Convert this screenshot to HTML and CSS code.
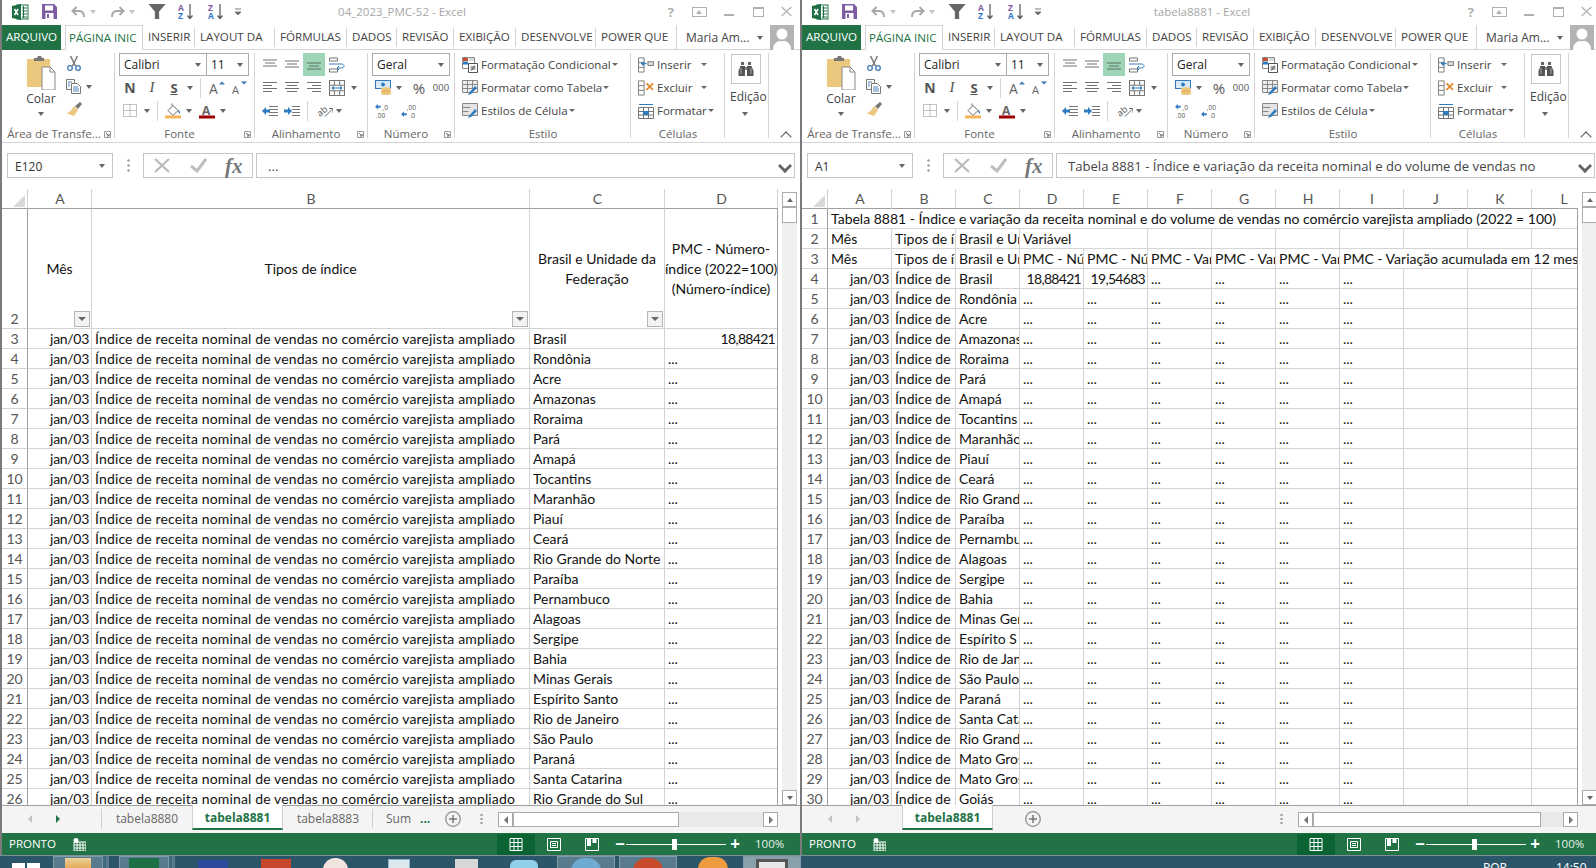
FILE: index.html
```html
<!DOCTYPE html>
<html lang="pt-BR">
<head>
    <meta charset="UTF-8">
    <title>Excel - PMC</title>
    <link rel="stylesheet" href="styles.css">
</head>
<body>

    <!-- Icon sprite, used by both windows -->
    <svg class="sprite" xmlns="http://www.w3.org/2000/svg">
        <symbol id="i-excel" viewBox="0 0 17 16"><rect x="5" y="1" width="11" height="14" fill="#fff" stroke="#1d7044"/><path d="M10 4h5M10 7h5M10 10h5M10 13h5M11.5 2v12" stroke="#1d7044"/><path d="M0 2l9-2v16l-9-2z" fill="#1d7044"/><path d="M2.5 5l3.5 6M6 5l-3.5 6" stroke="#fff" stroke-width="1.5"/></symbol>
        <symbol id="i-save" viewBox="0 0 15 15"><path d="M0 0h12l3 3v12H0z" fill="#7d5ea3"/><rect x="3" y="1.500" width="8" height="5" fill="#fff"/><rect x="3.500" y="9" width="8" height="6" fill="#fff"/><rect x="5" y="10" width="2" height="4" fill="#7d5ea3"/></symbol>
        <symbol id="i-undo" viewBox="0 0 15 14"><path d="M5.500 2L1.500 6l4 4" fill="none" stroke="#a8a8a8" stroke-width="2"/><path d="M2 6h6c3 0 5 2 5 6" fill="none" stroke="#a8a8a8" stroke-width="2"/></symbol>
        <symbol id="i-redo" viewBox="0 0 15 14"><path d="M9.500 2l4 4-4 4" fill="none" stroke="#a8a8a8" stroke-width="2"/><path d="M13 6H7c-3 0-5 2-5 6" fill="none" stroke="#a8a8a8" stroke-width="2"/></symbol>
        <symbol id="i-funnel" viewBox="0 0 16 14"><path d="M0 0h16l-6 7v7H6V7z" fill="#666"/></symbol>
        <symbol id="i-sortaz" viewBox="0 0 16 17"><text x="0" y="7.500" font-family="Open Sans" font-size="8.500" font-weight="700" fill="#7d5ea3">A</text><text x="0" y="16" font-family="Open Sans" font-size="8.500" font-weight="700" fill="#2f7cc0">Z</text><path d="M12 1v14M9.500 12.500l2.500 3 2.500-3" fill="none" stroke="#555" stroke-width="1.200"/></symbol>
        <symbol id="i-sortza" viewBox="0 0 16 17"><text x="0" y="7.500" font-family="Open Sans" font-size="8.500" font-weight="700" fill="#7d5ea3">Z</text><text x="0" y="16" font-family="Open Sans" font-size="8.500" font-weight="700" fill="#2f7cc0">A</text><path d="M12 1v14M9.500 12.500l2.500 3 2.500-3" fill="none" stroke="#555" stroke-width="1.200"/></symbol>
        <symbol id="i-custom" viewBox="0 0 8 8"><path d="M1 1h6M1 4h6l-3 3z" fill="#777" stroke="#777"/></symbol>
        <symbol id="i-avatar" viewBox="0 0 24 25"><rect width="24" height="25" fill="#b3b3b3"/><circle cx="12" cy="9" r="5.500" fill="#fff"/><path d="M3 25c0-6 3-8 6-9h6c3 1 6 3 6 9z" fill="#fff"/></symbol>
        <symbol id="i-paste" viewBox="0 0 29 34"><rect x="0" y="3" width="23" height="28" rx="1" fill="#ecc87f"/><path d="M7 5V2h3l1-2h3l1 2h2v3z" fill="#777"/><path d="M15 11h8l5 5v18H15z" fill="#fff" stroke="#8a8a8a"/><path d="M23 11v5h5" fill="none" stroke="#8a8a8a"/></symbol>
        <symbol id="i-scissors" viewBox="0 0 15 15"><path d="M4 0l5 10M11 0L6 10" stroke="#777" stroke-width="1.500"/><circle cx="3.500" cy="12" r="2.300" fill="none" stroke="#3a78b4" stroke-width="1.300"/><circle cx="11.500" cy="12" r="2.300" fill="none" stroke="#3a78b4" stroke-width="1.300"/></symbol>
        <symbol id="i-copy" viewBox="0 0 16 15"><path d="M.500.500h8v10h-8z" fill="#fff" stroke="#777"/><path d="M5.500 4.500h6l3 3v7h-9z" fill="#fff" stroke="#777"/><path d="M7 8h5M7 10h6M7 12h6M2 3h4M2 5h2M2 7h2" stroke="#4f86bd"/></symbol>
        <symbol id="i-brush" viewBox="0 0 16 15"><path d="M9 4l3 3 4-5-2-2z" fill="#777"/><path d="M8 4l4 4-4 6-8-3c3 0 5-2 8-7z" fill="#ecc87f"/></symbol>
        <symbol id="i-growup" viewBox="0 0 17 14"><text x="0" y="13" font-family="Open Sans" font-size="14" fill="#666">A</text><path d="M10 4l3-3 3 3z" fill="#3a78b4"/></symbol>
        <symbol id="i-growdn" viewBox="0 0 17 14"><text x="1" y="13" font-family="Open Sans" font-size="11" fill="#666">A</text><path d="M10 1l3 3 3-3z" fill="#3a78b4"/></symbol>
        <symbol id="i-borders" viewBox="0 0 14 13"><path d="M.500.500h13v12H.500z" fill="none" stroke="#888" stroke-dasharray="1 1"/><path d="M7 .500v12M.500 6.500h13" stroke="#888" stroke-dasharray="1 1"/></symbol>
        <symbol id="i-fill" viewBox="0 0 16 15"><path d="M3 7l5-5 5 5-5 5z" fill="#fff" stroke="#666"/><path d="M7 2V0" stroke="#666"/><path d="M13 6c2 1 2 3 2 4-1.500 0-2-2-2-4z" fill="#3a78b4"/><rect y="12" width="16" height="3" fill="#f6b35e"/></symbol>
        <symbol id="i-color" viewBox="0 0 16 15"><text x="3" y="11" font-family="Open Sans" font-size="12" font-weight="700" fill="#666">A</text><rect y="12" width="16" height="3" fill="#a00000"/></symbol>
        <symbol id="i-atop" viewBox="0 0 14 10"><path d="M0 .500h14M2 3.500h10M0 6.500h14" stroke="#707070"/></symbol>
        <symbol id="i-amid" viewBox="0 0 14 10"><path d="M0 1.500h14M2 4.500h10M0 7.500h14" stroke="#707070"/></symbol>
        <symbol id="i-abot" viewBox="0 0 14 10"><path d="M0 3.500h14M2 6.500h10M0 9.500h14" stroke="#5f6f66"/></symbol>
        <symbol id="i-wrap" viewBox="0 0 16 15"><path d="M.500.500h8v3h-8zM.500 11.500h8v3h-8z" fill="none" stroke="#777"/><path d="M0 6.500h12c4 0 4 4 0 4H8" fill="none" stroke="#2f7cc0"/><path d="M10 8.500l-2 2 2 2" fill="none" stroke="#2f7cc0"/></symbol>
        <symbol id="i-left" viewBox="0 0 14 11"><path d="M0 .500h14M0 3.500h9M0 6.500h14M0 9.500h9" stroke="#707070"/></symbol>
        <symbol id="i-center" viewBox="0 0 14 11"><path d="M0 .500h14M2 3.500h10M0 6.500h14M2 9.500h10" stroke="#707070"/></symbol>
        <symbol id="i-right" viewBox="0 0 14 11"><path d="M0 .500h14M5 3.500h9M0 6.500h14M5 9.500h9" stroke="#707070"/></symbol>
        <symbol id="i-merge" viewBox="0 0 15 15"><path d="M.500.500h14v14H.500zM.500 5h14M.500 10h14M5 .500V5M10 .500V5M5 10v4.500M10 10v4.500" fill="none" stroke="#777"/><path d="M3 7.500h9" stroke="#2f7cc0"/><path d="M4.500 6L3 7.500 4.500 9M10.500 6L12 7.500 10.500 9" fill="none" stroke="#2f7cc0"/></symbol>
        <symbol id="i-outdent" viewBox="0 0 16 10"><path d="M7 .500h9M7 3.500h9M7 6.500h9M7 9.500h9" stroke="#777"/><path d="M0 5l4-4v2.500h4v3H4V9z" fill="#2f7cc0"/></symbol>
        <symbol id="i-indent" viewBox="0 0 16 10"><path d="M8 .500h8M8 3.500h8M8 6.500h8M8 9.500h8" stroke="#777"/><path d="M8 5L4 1v2.500H0v3h4V9z" fill="#2f7cc0"/></symbol>
        <symbol id="i-orient" viewBox="0 0 17 14"><text x="1" y="11" font-family="Open Sans" font-size="9" fill="#555" transform="rotate(-40 6 8)">ab</text><path d="M9 13l7-7M13 5h4v4" fill="none" stroke="#666"/></symbol>
        <symbol id="i-money" viewBox="0 0 17 15"><rect x=".500" y=".500" width="15" height="8" fill="#d9e8f5" stroke="#2f7cc0"/><circle cx="8" cy="4.500" r="2" fill="#2f7cc0"/><ellipse cx="11" cy="9" rx="5" ry="1.800" fill="#ecc87f"/><ellipse cx="11" cy="11.500" rx="5" ry="1.800" fill="#e4b85f"/><ellipse cx="11" cy="13.500" rx="5" ry="1.500" fill="#ecc87f"/></symbol>
        <symbol id="i-incdec" viewBox="0 0 18 16"><path d="M0 4l3-3v2h3v2H3v2z" fill="#2f7cc0"/><text x="8" y="7.500" font-family="Open Sans" font-size="7" fill="#555">,0</text><text x="1" y="15.500" font-family="Open Sans" font-size="7" fill="#555">,00</text></symbol>
        <symbol id="i-decdec" viewBox="0 0 18 16"><text x="6" y="7.500" font-family="Open Sans" font-size="7" fill="#555">,00</text><path d="M0 12l3-3v2h3v2H3v2z" fill="#2f7cc0"/><text x="9" y="15.500" font-family="Open Sans" font-size="7" fill="#555">,0</text></symbol>
        <symbol id="i-cond" viewBox="0 0 16 16"><path d="M.500.500h12v11H.500z" fill="#fff" stroke="#888"/><rect x="1" y="1" width="5" height="3" fill="#c8502e"/><rect x="1" y="4.500" width="5" height="3" fill="#2f7cc0"/><rect x="7" y="1" width="5" height="3" fill="#d9d9d9"/><path d="M6.500 6.500h9v9h-9z" fill="#fff" stroke="#555"/><path d="M8.500 10h5M8.500 12h5M12.500 8.500l-3 5" stroke="#555"/></symbol>
        <symbol id="i-table" viewBox="0 0 16 16"><path d="M.500.500h15v12H.500zM.500 4.500h15M.500 8.500h15M5.500.500v12M10.500.500v12" fill="#eee" stroke="#888"/><path d="M7 13l6-7 2 2-6 6-3 1z" fill="#2f7cc0"/></symbol>
        <symbol id="i-style" viewBox="0 0 16 16"><path d="M.500.500h15v12H.500z" fill="#e4e4e4" stroke="#888"/><path d="M.500 4.500h8M.500 8.500h6" stroke="#888"/><path d="M7 13l6-7 2 2-6 6-3 1z" fill="#2f7cc0"/></symbol>
        <symbol id="i-insert" viewBox="0 0 17 16"><path d="M.500.500h6v15h-6zM.500 5.500h6M.500 10.500h6" fill="#fff" stroke="#777"/><path d="M10.500 4.500h6v4h-6z" fill="#ddd" stroke="#777"/><path d="M9 6.500H4M6 4.500l-2 2 2 2" fill="none" stroke="#2f7cc0" stroke-width="1.500"/></symbol>
        <symbol id="i-delete" viewBox="0 0 17 16"><path d="M.500.500h6v15h-6zM.500 5.500h6M.500 10.500h6" fill="#fff" stroke="#777"/><path d="M9 3l7 7M16 3l-7 7" stroke="#e08a2e" stroke-width="2"/></symbol>
        <symbol id="i-format" viewBox="0 0 16 16"><path d="M.500 4.500h15v11H.500zM.500 8.500h15M.500 12h15M5.500 4.500v11M10.500 4.500v11" fill="#fff" stroke="#777"/><rect x="5" y="8" width="6" height="4" fill="#2f7cc0"/><path d="M1 1.500h14" stroke="#2f7cc0"/></symbol>
        <symbol id="i-binoc" viewBox="0 0 16 14"><path d="M3 0h3v3H3zM10 0h3v3h-3z" fill="#666"/><path d="M2.500 4H7v10H.500v-5zM13.500 4H9v10h6.500V9z" fill="#555"/><rect x="7" y="5" width="2" height="3" fill="#888"/><path d="M3 6v6M13 6v6" stroke="#aaa"/></symbol>
        <symbol id="i-launch" viewBox="0 0 7 7"><path d="M.500.500h6v6h-6z" fill="none" stroke="#9a9a9a"/><path d="M2 2l3 3M5 3v2H3" fill="none" stroke="#666"/></symbol>
        <symbol id="i-x" viewBox="0 0 16 15"><path d="M1 1l14 13M15 1L1 14" stroke="#b8b8b8" stroke-width="2.200"/></symbol>
        <symbol id="i-check" viewBox="0 0 18 15"><path d="M1 8l6 5 9-12" fill="none" stroke="#bfbfbf" stroke-width="3"/></symbol>
        <symbol id="i-plusc" viewBox="0 0 16 16"><circle cx="8" cy="8" r="7.300" fill="none" stroke="#8e8e8e" stroke-width="1.300"/><path d="M8 4v8M4 8h8" stroke="#777" stroke-width="1.500"/></symbol>
        <symbol id="i-macro" viewBox="0 0 13 13"><path d="M1 4h12v9H1zM1 7h12M1 10h12M4 4v9M7 4v9M10 4v9" fill="none" stroke="#fff"/><circle cx="3" cy="2.500" r="2.500" fill="#fff"/></symbol>
        <symbol id="i-vnormal" viewBox="0 0 13 13"><path d="M.500.500h12v12H.500zM.500 4.500h12M.500 8.500h12M4.500.500v12M8.500.500v12" fill="none" stroke="#fff"/></symbol>
        <symbol id="i-vlayout" viewBox="0 0 14 13"><path d="M.500.500h13v12H.500z" fill="none" stroke="#fff"/><path d="M3.500 3.500h7v6h-7zM5 5.500h4M5 7.500h4" fill="none" stroke="#fff"/></symbol>
        <symbol id="i-vbreak" viewBox="0 0 14 13"><path d="M.500.500h13v12H.500z" fill="none" stroke="#fff"/><path d="M2 0h4v8H2zM7.500 0h4v5h-4z" fill="#fff"/></symbol>
    </svg>

    <div class="desk">
        <div class="window" id="win1"></div>
        <div class="window" id="win2"></div>
    </div>

    <div class="taskbar">
        <div class="tb-start"><i></i><i></i></div>
        <div class="tb-btn tb-stack"><span class="tb-ic ic-folder"></span></div>
        <div class="tb-btn tb-stack"><span class="tb-ic ic-xl"></span></div>
        <span class="tb-ic ic-word"></span>
        <span class="tb-ic ic-ppt"></span>
        <span class="tb-ic ic-ball"></span>
        <span class="tb-ic ic-win"></span>
        <span class="tb-ic ic-note"></span>
        <span class="tb-ic ic-cloud"></span>
        <div class="tb-btn"><span class="tb-ic ic-blue"></span></div>
        <div class="tb-btn"><span class="tb-ic ic-red"></span></div>
        <span class="tb-ic ic-fox"></span>
        <div class="tb-btn tb-light"><span class="tb-ic ic-box"></span></div>
        <div class="tb-tray"><span>POR</span><span>14:50</span></div>
    </div>

    <template id="chrome">
        <div class="titlebar">
            <div class="qat">
                <svg class="ic-excel"><use href="#i-excel"/></svg>
                <svg class="ic-save"><use href="#i-save"/></svg>
                <svg class="ic-undo"><use href="#i-undo"/></svg><span class="caret light"></span>
                <svg class="ic-redo"><use href="#i-redo"/></svg><span class="caret light"></span>
                <svg class="ic-funnel"><use href="#i-funnel"/></svg>
                <svg class="ic-sort ic-sort1"><use href="#i-sortaz"/></svg>
                <svg class="ic-sort"><use href="#i-sortza"/></svg>
                <svg class="ic-custom"><use href="#i-custom"/></svg>
            </div>
            <div class="doc-title"></div>
            <div class="win-ctrl">
                <span class="help">?</span>
                <span class="ctl-restore"></span>
                <span class="ctl-min"></span>
                <span class="ctl-max"></span>
                <svg class="ctl-close"><use href="#i-x"/></svg>
            </div>
        </div>

        <div class="tabs">
            <div class="tab tab-file">ARQUIVO</div>
            <div class="tab tab-on">PÁGINA INIC</div>
            <div class="tab">INSERIR</div>
            <div class="tab">LAYOUT DA</div>
            <div class="tab">FÓRMULAS</div>
            <div class="tab">DADOS</div>
            <div class="tab">REVISÃO</div>
            <div class="tab">EXIBIÇÃO</div>
            <div class="tab">DESENVOLVE</div>
            <div class="tab">POWER QUE</div>
            <div class="user"><span>Maria Am...</span><span class="caret"></span><svg class="avatar"><use href="#i-avatar"/></svg></div>
        </div>

        <div class="ribbon">
            <section class="group g-clip">
                <div class="body clip-body">
                    <div class="paste">
                        <svg class="ic-paste"><use href="#i-paste"/></svg>
                        <span>Colar</span>
                        <span class="caret"></span>
                    </div>
                    <div class="clip-tools">
                        <svg class="ic15"><use href="#i-scissors"/></svg>
                        <div class="row-tight"><svg class="ic15"><use href="#i-copy"/></svg><span class="caret"></span></div>
                        <svg class="ic15"><use href="#i-brush"/></svg>
                    </div>
                </div>
                <div class="label"><span>Área de Transfe...</span><svg class="launch"><use href="#i-launch"/></svg></div>
            </section>

            <section class="group g-font">
                <div class="body">
                    <div class="rrow">
                        <div class="combo w-font"><span>Calibri</span><span class="caret"></span></div>
                        <div class="combo w-size"><span>11</span><span class="caret"></span></div>
                    </div>
                    <div class="rrow">
                        <span class="btn b22 fmt-n">N</span>
                        <span class="btn b22 fmt-i">I</span>
                        <span class="btn b22 fmt-s">S</span>
                        <span class="btn b10"><span class="caret"></span></span>
                        <span class="vsep m5"></span>
                        <span class="btn b22"><svg class="ic17"><use href="#i-growup"/></svg></span>
                        <span class="btn b22"><svg class="ic17"><use href="#i-growdn"/></svg></span>
                    </div>
                    <div class="rrow">
                        <span class="btn b22"><svg class="ic14"><use href="#i-borders"/></svg></span>
                        <span class="btn b12"><span class="caret"></span></span>
                        <span class="vsep m-r8"></span>
                        <svg class="ic16"><use href="#i-fill"/></svg>
                        <span class="btn b16"><span class="caret"></span></span>
                        <svg class="ic16 ml2"><use href="#i-color"/></svg>
                        <span class="btn b16"><span class="caret"></span></span>
                    </div>
                </div>
                <div class="label"><span>Fonte</span><svg class="launch"><use href="#i-launch"/></svg></div>
            </section>

            <section class="group g-align">
                <div class="body">
                    <div class="rrow">
                        <span class="btn b22"><svg class="ic14s"><use href="#i-atop"/></svg></span>
                        <span class="btn b22"><svg class="ic14s"><use href="#i-amid"/></svg></span>
                        <span class="btn b22 btn-on"><svg class="ic14s"><use href="#i-abot"/></svg></span>
                        <span class="btn b24"><svg class="ic16"><use href="#i-wrap"/></svg></span>
                    </div>
                    <div class="rrow">
                        <span class="btn b22"><svg class="ic14s"><use href="#i-left"/></svg></span>
                        <span class="btn b22"><svg class="ic14s"><use href="#i-center"/></svg></span>
                        <span class="btn b22"><svg class="ic14s"><use href="#i-right"/></svg></span>
                        <span class="btn b24"><svg class="ic16"><use href="#i-merge"/></svg></span>
                        <span class="btn b10"><span class="caret"></span></span>
                    </div>
                    <div class="rrow">
                        <span class="btn b22"><svg class="ic16"><use href="#i-outdent"/></svg></span>
                        <span class="btn b22"><svg class="ic16"><use href="#i-indent"/></svg></span>
                        <span class="vsep m-lr4"></span>
                        <svg class="ic17 ml4"><use href="#i-orient"/></svg>
                        <span class="btn b12"><span class="caret"></span></span>
                    </div>
                </div>
                <div class="label"><span>Alinhamento</span><svg class="launch"><use href="#i-launch"/></svg></div>
            </section>

            <section class="group g-num">
                <div class="body">
                    <div class="rrow">
                        <div class="combo w-num"><span>Geral</span><span class="caret"></span></div>
                    </div>
                    <div class="rrow">
                        <span class="btn b22"><svg class="ic17"><use href="#i-money"/></svg></span>
                        <span class="btn b10"><span class="caret"></span></span>
                        <span class="btn b20 pct">%</span>
                        <span class="btn b20 thou">000</span>
                    </div>
                    <div class="rrow">
                        <span class="btn b22"><svg class="ic17"><use href="#i-incdec"/></svg></span>
                        <span class="btn b22 ml4"><svg class="ic17"><use href="#i-decdec"/></svg></span>
                    </div>
                </div>
                <div class="label"><span>Número</span><svg class="launch"><use href="#i-launch"/></svg></div>
            </section>

            <section class="group g-style">
                <div class="body">
                    <div class="rrow cmd"><svg class="ic16"><use href="#i-cond"/></svg><span>Formatação Condicional</span><span class="caret"></span></div>
                    <div class="rrow cmd"><svg class="ic16"><use href="#i-table"/></svg><span>Formatar como Tabela</span><span class="caret"></span></div>
                    <div class="rrow cmd"><svg class="ic16"><use href="#i-style"/></svg><span>Estilos de Célula</span><span class="caret"></span></div>
                </div>
                <div class="label"><span>Estilo</span></div>
            </section>

            <section class="group g-cells">
                <div class="body">
                    <div class="rrow cmd"><svg class="ic16"><use href="#i-insert"/></svg><span>Inserir</span><span class="caret wide"></span></div>
                    <div class="rrow cmd"><svg class="ic16"><use href="#i-delete"/></svg><span>Excluir</span><span class="caret wide"></span></div>
                    <div class="rrow cmd"><svg class="ic16"><use href="#i-format"/></svg><span>Formatar</span><span class="caret"></span></div>
                </div>
                <div class="label"><span>Células</span></div>
            </section>

            <section class="group g-edit">
                <div class="edit-box"><svg class="ic16"><use href="#i-binoc"/></svg></div>
                <span class="edit-text">Edição</span>
                <span class="caret"></span>
            </section>

            <div class="collapse"></div>
        </div>

        <div class="formula">
            <div class="namebox"><span class="name"></span><span class="caret"></span></div>
            <div class="fdots"></div>
            <div class="fbtns">
                <svg class="ic-fx"><use href="#i-x"/></svg>
                <svg class="ic-fc"><use href="#i-check"/></svg>
                <span class="fx">fx</span>
            </div>
            <div class="finput"><span class="ftext"></span><span class="fchev"></span></div>
        </div>
    </template>

    <template id="footer">
        <div class="status">
            <span class="ready">PRONTO</span>
            <svg class="ic-macro"><use href="#i-macro"/></svg>
            <div class="vbtn vbtn-on"><svg><use href="#i-vnormal"/></svg></div>
            <div class="vbtn"><svg><use href="#i-vlayout"/></svg></div>
            <div class="vbtn"><svg><use href="#i-vbreak"/></svg></div>
            <span class="zm zm-minus">&minus;</span>
            <div class="slider"><i></i></div>
            <span class="zm">+</span>
            <span class="zoom">100%</span>
        </div>
    </template>

    <script>
        const states = ['Brasil', 'Rondônia', 'Acre', 'Amazonas', 'Roraima', 'Pará', 'Amapá', 'Tocantins', 'Maranhão', 'Piauí', 'Ceará', 'Rio Grande do Norte', 'Paraíba', 'Pernambuco', 'Alagoas', 'Sergipe', 'Bahia', 'Minas Gerais', 'Espírito Santo', 'Rio de Janeiro', 'São Paulo', 'Paraná', 'Santa Catarina', 'Rio Grande do Sul', 'Mato Grosso do Sul', 'Mato Grosso', 'Goiás'];
        const indice = 'Índice de receita nominal de vendas no comércio varejista ampliado';
        const tplChrome = document.getElementById('chrome');
        const tplFooter = document.getElementById('footer');

        // Small helper for table cells: [text, class, colspan]
        function cell(tr, text, cls, span) {
            const td = document.createElement('td');
            td.textContent = text || '';
            if (cls) td.className = cls;
            if (span) td.colSpan = span;
            tr.appendChild(td);
            return td;
        }

        function filterBtn(td) {
            const b = document.createElement('span');
            b.className = 'filter';
            b.innerHTML = '<span class="caret"></span>';
            td.appendChild(b);
        }

        function buildSheet(widths, letters, fill) {
            const wrap = document.createElement('div');
            wrap.className = 'grid-wrap';
            const table = document.createElement('table');
            const colgroup = document.createElement('colgroup');
            const all = [26].concat(widths);
            all.forEach(w => {
                const col = document.createElement('col');
                col.style.width = `${w}px`;
                colgroup.appendChild(col);
            });
            table.style.width = `${all.reduce((a, b) => a + b, 0)}px`;
            table.appendChild(colgroup);
            const head = document.createElement('tr');
            head.className = 'col-head';
            cell(head, '', 'corner');
            letters.forEach(l => cell(head, l));
            table.appendChild(head);
            fill(table);
            wrap.appendChild(table);
            return wrap;
        }

        function addRow(table, n, cls) {
            const tr = document.createElement('tr');
            if (cls) tr.className = cls;
            cell(tr, n, 'rh');
            table.appendChild(tr);
            return tr;
        }

        function fillLeft(table) {
            const tall = addRow(table, 2, 'tall');
            filterBtn(cell(tall, 'Mês', 'hd'));
            filterBtn(cell(tall, 'Tipos de índice', 'hd'));
            filterBtn(cell(tall, 'Brasil e Unidade da\nFederação', 'hd'));
            cell(tall, 'PMC - Número-\níndice (2022=100)\n(Número-índice)', 'hd');
            states.slice(0, 24).forEach((st, i) => {
                const tr = addRow(table, i + 3);
                cell(tr, 'jan/03', 'num');
                cell(tr, indice, 'long');
                cell(tr, st);
                if (i === 0) cell(tr, '18,88421', 'num val');
                else cell(tr, '...');
            });
        }

        // The narrow columns on the right only show the start of each text
        function fillRight(table) {
            const r1 = addRow(table, 1);
            cell(r1, 'Tabela 8881 - Índice e variação da receita nominal e do volume de vendas no comércio varejista ampliado (2022 = 100)', '', 12);
            const r2 = addRow(table, 2);
            cell(r2, 'Mês');
            cell(r2, 'Tipos de ín');
            cell(r2, 'Brasil e Un');
            cell(r2, 'Variável', '', 2);
            for (let i = 0; i < 7; i++) cell(r2);
            const r3 = addRow(table, 3);
            cell(r3, 'Mês');
            cell(r3, 'Tipos de ín');
            cell(r3, 'Brasil e Un');
            cell(r3, 'PMC - Núm');
            cell(r3, 'PMC - Núm');
            cell(r3, 'PMC - Var');
            cell(r3, 'PMC - Var');
            cell(r3, 'PMC - Var');
            cell(r3, 'PMC - Variação acumulada em 12 meses', '', 4);
            states.forEach((st, i) => {
                const tr = addRow(table, i + 4);
                cell(tr, 'jan/03', 'num');
                cell(tr, 'Índice de');
                cell(tr, st.slice(0, 10));
                for (let c = 0; c < 6; c++) {
                    if (i === 0 && c === 0) cell(tr, '18,88421', 'num val');
                    else if (i === 0 && c === 1) cell(tr, '19,54683', 'num val');
                    else cell(tr, '...');
                }
                for (let c = 0; c < 3; c++) cell(tr);
            });
        }

        function buildVScroll() {
            const v = document.createElement('div');
            v.className = 'vscroll';
            v.innerHTML = '<div class="sb-btn"><span class="caret up"></span></div><div class="sb-thumb"></div><div class="sb-track"></div><div class="sb-btn"><span class="caret"></span></div>';
            return v;
        }

        function buildSheetBar(tabs, extraCls) {
            const bar = document.createElement('div');
            bar.className = `sheetbar ${extraCls}`;
            let html = '<div class="nav"><span class="tri-l"></span><span class="tri-r"></span></div><div class="sheets">';
            tabs.forEach(t => {
                html += `<div class="sheet ${t.cls || ''}">${t.name}</div>`;
            });
            html += '</div>';
            if (extraCls === 'bar-left') html += '<span class="more">...</span>';
            html += '<svg class="ic-plus"><use href="#i-plusc"/></svg><span class="sdots"></span>';
            html += '<div class="hscroll"><div class="sb-btn"><span class="tri-l dark"></span></div><div class="sb-thumb"></div><div class="sb-track"></div><div class="sb-btn"><span class="tri-r dark"></span></div></div>';
            bar.innerHTML = html;
            return bar;
        }

        function buildWindow(id, opt) {
            const win = document.getElementById(id);
            win.appendChild(tplChrome.content.cloneNode(true));
            win.querySelector('.doc-title').textContent = opt.title;
            win.querySelector('.name').textContent = opt.name;
            win.querySelector('.ftext').textContent = opt.formula;
            const sheet = document.createElement('div');
            sheet.className = 'sheet-area';
            sheet.appendChild(opt.grid);
            sheet.appendChild(buildVScroll());
            win.appendChild(sheet);
            win.appendChild(opt.bar);
            win.appendChild(tplFooter.content.cloneNode(true));
        }

        buildWindow('win1', {
            title: '04_2023_PMC-52 - Excel',
            name: 'E120',
            formula: '...',
            grid: buildSheet([64, 438, 135, 113], ['A', 'B', 'C', 'D'], fillLeft),
            bar: buildSheetBar([{ name: 'tabela8880' }, { name: 'tabela8881', cls: 'sheet-on' }, { name: 'tabela8883' }, { name: 'Sumá', cls: 'sheet-cut' }], 'bar-left')
        });

        buildWindow('win2', {
            title: 'tabela8881 - Excel',
            name: 'A1',
            formula: 'Tabela 8881 - Índice e variação da receita nominal e do volume de vendas no',
            grid: buildSheet(Array(12).fill(64), ['A', 'B', 'C', 'D', 'E', 'F', 'G', 'H', 'I', 'J', 'K', 'L'], fillRight),
            bar: buildSheetBar([{ name: 'tabela8881', cls: 'sheet-on' }], 'bar-right')
        });
    </script>
</body>
</html>
```

FILE: styles.css
```css
* {
    box-sizing: border-box;
}
html, body {
    margin: 0;
    padding: 0;
    height: 868px;
    overflow: hidden;
}
body {
    font-family: "Open Sans", sans-serif;
    font-size: 12px;
    color: #444;
    background: #fff;
}
svg {
    display: block;
    flex: none;
}
.sprite {
    display: none;
}

.desk {
    display: flex;
    height: 855px;
}
.window {
    position: relative;
    height: 855px;
    border-left: 2px solid #7a7a7a;
    overflow: hidden;
    background: #fff;
}
#win1 {
    width: 800px;
}
#win2 {
    width: 796px;
}
.window > * {
    width: 798px;
}

.caret {
    display: block;
    flex: none;
    width: 0;
    height: 0;
    border-left: 3.5px solid transparent;
    border-right: 3.5px solid transparent;
    border-top: 4px solid #666;
}
.caret.light {
    border-top-color: #c4c4c4;
    margin-left: 4px;
}
.caret.up {
    border-top: 0;
    border-bottom: 4px solid #666;
}

/* title bar */
.titlebar {
    display: flex;
    align-items: center;
    height: 25px;
    padding-bottom: 2px;
}
.qat, .win-ctrl {
    flex: 1 1 0;
    display: flex;
    align-items: center;
}
.qat {
    padding-left: 10px;
}
.ic-excel {
    width: 17px;
    height: 16px;
}
.ic-save {
    width: 15px;
    height: 15px;
    margin-left: 13px;
}
.ic-undo, .ic-redo {
    width: 15px;
    height: 14px;
    margin-left: 14px;
}
.ic-funnel {
    width: 18px;
    height: 15px;
    margin-left: 13px;
}
.ic-sort {
    width: 16px;
    height: 17px;
    margin-left: 14px;
}
.ic-sort1 {
    margin-left: 12px;
}
.ic-custom {
    width: 8px;
    height: 8px;
    margin-left: 10px;
}
.doc-title {
    color: #a6a6a6;
    white-space: nowrap;
    font-size: 11.500px;
}
.win-ctrl {
    justify-content: flex-end;
    padding-right: 8px;
}
.help {
    color: #b0b0b0;
    font-weight: 700;
    font-size: 13px;
    margin-right: 18px;
}
.ctl-restore {
    position: relative;
    width: 15px;
    height: 10px;
    border: 1px solid #b0b0b0;
    margin-right: 17px;
}
.ctl-restore::after {
    content: "";
    position: absolute;
    left: 3px;
    top: 2px;
    border-left: 3.500px solid transparent;
    border-right: 3.500px solid transparent;
    border-bottom: 4px solid #b0b0b0;
}
.ctl-min {
    width: 10px;
    height: 2px;
    background: #b0b0b0;
    margin: 6px 19px 0 0;
}
.ctl-max {
    width: 11px;
    height: 10px;
    border: 1px solid #b0b0b0;
    border-top-width: 2px;
    margin-right: 17px;
}
.ctl-close {
    width: 11px;
    height: 11px;
}

/* ribbon tabs */
.tabs {
    display: flex;
    height: 25px;
    border-bottom: 1px solid #d4d4d4;
}
.tab {
    flex: none;
    height: 25px;
    line-height: 24px;
    padding-left: 5px;
    font-size: 11.600px;
    white-space: nowrap;
    overflow: hidden;
    color: #444;
    position: relative;
}
.tab:not(.tab-file):not(.tab-on):not(:nth-child(10))::after {
    content: "";
    position: absolute;
    right: 0;
    top: 3px;
    height: 19px;
    border-right: 1px solid #d4d4d4;
}
.tab:nth-child(3) { width: 52px; }
.tab:nth-child(4) { width: 80px; }
.tab:nth-child(5) { width: 72px; }
.tab:nth-child(6) { width: 50px; }
.tab:nth-child(7) { width: 57px; }
.tab:nth-child(8) { width: 62px; }
.tab:nth-child(9) { width: 80px; }
.tab:nth-child(10) { width: 81px; border-right: 1px solid #d4d4d4; }
.tab-file {
    width: 59px;
    margin-right: 4px;
    background: #217346;
    color: #fff;
    padding-left: 4px;
}
.tab-on {
    width: 78px;
    height: 25px;
    padding-left: 3px;
    color: #217346;
    border: 1px solid #d4d4d4;
    border-bottom: 0;
    background: #fff;
}
.user {
    display: flex;
    align-items: center;
    padding-left: 9px;
    height: 25px;
    flex: none;
}
.user .caret {
    margin: 0 7px 0 8px;
}
.avatar {
    width: 24px;
    height: 25px;
}

/* ribbon */
.ribbon {
    display: flex;
    height: 93px;
    border-bottom: 1px solid #d4d4d4;
}
.group {
    flex: none;
    display: flex;
    flex-direction: column;
    position: relative;
}
.group::after {
    content: "";
    position: absolute;
    right: 0;
    top: 3px;
    bottom: 4px;
    border-right: 1px solid #d4d4d4;
}
.g-clip { width: 113px; }
.g-font { width: 140px; padding-left: 4px; }
.g-align { width: 113px; padding-left: 4px; }
.g-num { width: 87px; padding-left: 4px; }
.g-style { width: 176px; padding-left: 7px; }
.g-cells { width: 94px; padding-left: 7px; }
.g-edit {
    width: 44px;
    padding: 4px 0 0 6px;
    align-items: flex-start;
}
.body {
    flex: 1;
    padding-top: 3px;
}
.label {
    display: flex;
    align-items: center;
    height: 20px;
    padding-top: 2px;
    color: #666;
    white-space: nowrap;
    font-size: 11.500px;
}
.label span {
    flex: 1;
    text-align: center;
}
.g-font .label, .g-align .label, .g-num .label {
    margin-left: -4px;
}
.g-style .label, .g-cells .label {
    margin-left: -7px;
}
.g-clip .label {
    padding-left: 2px;
}
.launch {
    width: 7px;
    height: 7px;
    margin-right: 4px;
    margin-top: 3px;
}
.rrow {
    display: flex;
    align-items: center;
    height: 23px;
    white-space: nowrap;
}
.btn {
    display: flex;
    flex: none;
    align-items: center;
    justify-content: center;
    height: 23px;
}
.b10 { width: 10px; }
.b12 { width: 12px; }
.b16 { width: 16px; }
.b20 { width: 20px; }
.b22 { width: 22px; }
.b24 { width: 24px; }
.btn-on {
    background: #9fd5b7;
}
.ic14 { width: 14px; height: 13px; }
.ic14s { width: 14px; height: 11px; }
.ic15 { width: 16px; height: 15px; }
.ic16 { width: 16px; height: 16px; }
.ic17 { width: 17px; height: 15px; }
.ml2 { margin-left: 2px; }
.ml4 { margin-left: 4px; }
.vsep {
    flex: none;
    width: 1px;
    height: 20px;
    background: #d4d4d4;
}
.vsep.m5 { margin: 0 5px; }
.vsep.m-r8 { margin: 0 7px 0 4px; }
.vsep.m-lr4 { margin: 0 4px; }
.combo {
    display: flex;
    align-items: center;
    justify-content: space-between;
    height: 23px;
    padding: 0 5px 0 4px;
    border: 1px solid #ababab;
    color: #222;
}
.w-font { width: 88px; }
.w-size { width: 43px; margin-left: -1px; }
.w-num { width: 78px; }
.fmt-n { font-weight: 700; font-size: 14px; color: #555; }
.fmt-i { font-family: "Liberation Serif", serif; font-style: italic; font-size: 15px; color: #555; }
.fmt-s { font-weight: 700; font-size: 13px; color: #555; text-decoration: underline; }
.pct { margin-left: 5px; font-size: 15px; color: #555; }
.thou { margin-left: 2px; font-size: 9.500px; color: #555; }
.cmd {
    gap: 3px;
    font-size: 11.500px;
}
.cmd .caret {
    margin-left: -2px;
    border-left-width: 3px;
    border-right-width: 3px;
    border-top-width: 3px;
}
.cmd .caret.wide {
    margin-left: 6px;
}

/* clipboard */
.clip-body {
    display: flex;
    padding-top: 6px;
}
.paste {
    width: 52px;
    margin-left: 13px;
    display: flex;
    flex-direction: column;
    align-items: center;
}
.ic-paste {
    width: 29px;
    height: 34px;
}
.paste .caret {
    margin-top: 5px;
}
.clip-tools {
    display: flex;
    flex-direction: column;
    gap: 8px;
    margin-left: -1px;
}
.row-tight {
    display: flex;
    align-items: center;
    gap: 4px;
}

/* edit group */
.edit-box {
    width: 30px;
    height: 30px;
    border: 1px solid #c6c6c6;
    display: flex;
    align-items: center;
    justify-content: center;
}
.edit-text {
    margin: 4px 0 0 -1px;
    font-size: 12px;
}
.g-edit .caret {
    margin: 7px 0 0 11px;
}
.collapse {
    width: 8px;
    height: 8px;
    border-left: 1.500px solid #555;
    border-top: 1.500px solid #555;
    transform: rotate(45deg);
    margin: 83px 0 0 13px;
}

/* formula bar */
.formula {
    display: flex;
    align-items: stretch;
    height: 25px;
    margin: 10px 0 11px;
    padding-left: 5px;
}
.namebox {
    width: 106px;
    border: 1px solid #c6c6c6;
    display: flex;
    align-items: center;
    justify-content: space-between;
    padding: 1px 7px 0;
    color: #333;
}
.fdots {
    width: 30px;
    background: radial-gradient(circle, #aaa 1px, transparent 1.500px) center / 3px 5px repeat-y;
    margin: 6px 0;
}
.fbtns {
    width: 110px;
    border: 1px solid #c6c6c6;
    display: flex;
    align-items: center;
    padding-left: 10px;
}
.ic-fx {
    width: 16px;
    height: 15px;
}
.ic-fc {
    width: 18px;
    height: 15px;
    margin-left: 20px;
}
.fx {
    font-family: "Liberation Serif", serif;
    font-style: italic;
    font-weight: 700;
    font-size: 21px;
    line-height: 22px;
    color: #777;
    margin-left: 17px;
}
.finput {
    width: 539px;
    margin-left: 3px;
    border: 1px solid #c6c6c6;
    display: flex;
    align-items: center;
    justify-content: space-between;
    padding: 1px 3px 0 11px;
    font-size: 13.100px;
    color: #444;
}
.fchev {
    width: 10px;
    height: 10px;
    border-right: 3px solid #666;
    border-bottom: 3px solid #666;
    transform: rotate(45deg);
    margin: 0 1px 0 0;
}

/* sheet */
.sheet-area {
    display: flex;
    height: 616px;
    overflow: hidden;
}
.grid-wrap {
    position: relative;
    width: 776px;
    height: 616px;
    overflow: hidden;
    flex: none;
}
.grid-wrap::after {
    content: "";
    position: absolute;
    right: 0;
    top: 19px;
    bottom: 0;
    border-right: 1px solid #9f9f9f;
}
table {
    border-collapse: separate;
    border-spacing: 0;
    table-layout: fixed;
    font-family: Lato, sans-serif;
    font-size: 14px;
    color: #111;
}
td {
    height: 20px;
    padding: 0 2px 0 3px;
    border-right: 1px solid #d4d4d4;
    border-bottom: 1px solid #d4d4d4;
    white-space: nowrap;
    overflow: hidden;
}
td.num {
    text-align: right;
    letter-spacing: -.3px;
}
td.val {
    letter-spacing: -.7px;
}
td.long {
    letter-spacing: .14px;
}
td.rh {
    padding: 0;
    text-align: center;
    color: #555;
    border-right-color: #9f9f9f;
}
.col-head td {
    height: 20px;
    text-align: center;
    color: #555;
    border-bottom-color: #9f9f9f;
}
.col-head .corner {
    position: relative;
    border-right-color: #d4d4d4;
}
.corner::after {
    content: "";
    position: absolute;
    right: 2px;
    bottom: 1px;
    border-left: 12px solid transparent;
    border-bottom: 12px solid #d9d9d9;
}
.tall td {
    height: 120px;
}
.tall td.rh {
    vertical-align: bottom;
    padding-bottom: 1px;
}
td.hd {
    position: relative;
    padding: 0;
    white-space: pre;
    text-align: center;
    line-height: 20px;
}
.filter {
    position: absolute;
    right: 1px;
    bottom: 1px;
    width: 16px;
    height: 16px;
    border: 1px solid #b5b5b5;
    background: #f3f3f3;
    display: flex;
    align-items: center;
    justify-content: center;
}
.filter .caret {
    border-left-width: 4px;
    border-right-width: 4px;
}

.vscroll {
    width: 15px;
    margin: 3px 0 0 4px;
    display: flex;
    flex-direction: column;
    flex: none;
    background: #f0f0f0;
}
.sb-btn {
    flex: none;
    width: 15px;
    height: 15px;
    background: #fff;
    border: 1px solid #ababab;
    display: flex;
    align-items: center;
    justify-content: center;
}
.sb-thumb {
    flex: none;
    background: #fff;
    border: 1px solid #ababab;
}
.sb-track {
    flex: 1;
    background: #f0f0f0;
}
.vscroll .sb-thumb {
    height: 16px;
}

/* sheet tabs */
.sheetbar {
    display: flex;
    align-items: stretch;
    height: 28px;
    background: #f4f4f4;
    border-top: 1px solid #9f9f9f;
}
.nav {
    flex: none;
    width: 100px;
    display: flex;
    align-items: center;
    padding-left: 26px;
    gap: 24px;
    border-right: 1px solid #d0d0d0;
    margin: 3px 0 4px;
}
.bar-right .nav {
    border-right: 0;
}
.tri-l, .tri-r {
    display: block;
    width: 0;
    height: 0;
    border-top: 4px solid transparent;
    border-bottom: 4px solid transparent;
}
.tri-l { border-right: 4px solid #c0c0c0; }
.tri-r { border-left: 4px solid #217346; }
.bar-right .tri-r { border-left-color: #c0c0c0; }
.tri-l.dark { border-right-color: #777; }
.tri-r.dark { border-left-color: #777; }
.sheets {
    display: flex;
    flex: none;
}
.sheet {
    flex: none;
    width: 90px;
    text-align: center;
    line-height: 26px;
    color: #666;
    font-size: 12px;
    white-space: nowrap;
    overflow: hidden;
    position: relative;
}
.sheet:not(.sheet-on):not(.sheet-cut)::after {
    content: "";
    position: absolute;
    right: 0;
    top: 3px;
    height: 19px;
    border-right: 1px solid #d0d0d0;
}
.sheet:first-child:not(.sheet-on)::after {
    display: none;
}
.sheet-on {
    width: 91px;
    margin-top: -1px;
    height: 25px;
    background: #fff;
    color: #217346;
    font-weight: 700;
    border-left: 1px solid #d0d0d0;
    border-right: 1px solid #d0d0d0;
    border-bottom: 2px solid #217346;
}
.sheet-cut {
    width: 38px;
    text-align: left;
    padding-left: 13px;
}
.more {
    color: #217346;
    font-weight: 700;
    margin-left: 9px;
    line-height: 26px;
    width: 13px;
    overflow: hidden;
}
.ic-plus {
    width: 16px;
    height: 16px;
    margin: 5px 0 0 12px;
}
.bar-right .ic-plus {
    margin-left: 32px;
}
.sdots {
    width: 3px;
    margin: 7px 0 9px;
    background: radial-gradient(circle, #aaa 1px, transparent 1.500px) center top / 3px 4px repeat-y;
}
.bar-left .sdots {
    margin-left: 19px;
}
.bar-right .sdots {
    margin-left: 239px;
}
.hscroll {
    flex: none;
    width: 280px;
    height: 15px;
    margin: 6px 0 0 15px;
    display: flex;
    background: #e9e9e9;
}
.hscroll .sb-track {
    background: #e9e9e9;
}
.hscroll .sb-thumb {
    height: 15px;
}
.bar-left .hscroll .sb-thumb { width: 166px; }
.bar-right .hscroll .sb-thumb { width: 228px; }

/* status bar */
.status {
    display: flex;
    align-items: center;
    height: 22px;
    background: #217346;
    color: #fff;
    position: relative;
}
.ready {
    width: 64px;
    font-size: 11.500px;
    margin-left: 7px;
    padding-bottom: 2px;
}
.ic-macro {
    width: 13px;
    height: 13px;
}
.vbtn {
    flex: none;
    width: 38px;
    height: 21px;
    display: flex;
    align-items: center;
    justify-content: center;
}
.vbtn svg {
    width: 14px;
    height: 13px;
}
.vbtn-on {
    background: #0a6332;
    margin-left: 411px;
}
.zm {
    font-size: 17px;
    font-weight: 700;
    line-height: 20px;
    width: 10px;
    text-align: center;
}
.zm-minus {
    margin-left: 4px;
}
.slider {
    position: relative;
    width: 100px;
    height: 1px;
    background: #fff;
    margin: 0 4px 0 1px;
}
.slider i {
    position: absolute;
    left: 46px;
    top: -5px;
    width: 5px;
    height: 11px;
    background: #fff;
}
.zoom {
    font-size: 11.500px;
    margin-left: 15px;
    padding-bottom: 2px;
    color: #e6efe9;
}

/* taskbar */
.taskbar {
    display: flex;
    position: relative;
    height: 13px;
    overflow: hidden;
    background: #2b5669;
    border-top: 1px solid #7f8f99;
}
.tb-start {
    display: flex;
    gap: 2px;
    margin: 7px 0 0 12px;
    width: 29px;
}
.tb-start i {
    display: block;
    width: 13px;
    height: 6px;
    background: #fff;
}
.tb-btn {
    flex: none;
    width: 58px;
    display: flex;
    justify-content: center;
    background: #587b8d;
    border: 1px solid #7f9aa8;
    border-bottom: 0;
}
.tb-btn.tb-stack {
    width: 50px;
    box-shadow: 3px 0 0 #3f6a7d, 6px 0 0 #587b8d;
    margin-right: 12px;
}
.tb-start + .tb-btn {
    margin-left: 12px;
}
.tb-light {
    background: #8aa0aa;
}
.tb-ic {
    display: block;
    flex: none;
    height: 13px;
}
.ic-folder { width: 26px; margin-top: 1px; background: linear-gradient(#e9d29a, #e59e45); }
.ic-xl { width: 30px; margin-top: 1px; background: #1d7044; }
.ic-word { width: 30px; margin: 4px 0 0 17px; background: #2b4a9e; }
.ic-ppt { width: 30px; margin: 3px 0 0 33px; background: #c6472b; }
.ic-ball { width: 25px; margin: 2px 0 0 32px; background: #f0e4e0; border-radius: 12px 12px 0 0; }
.ic-win { width: 22px; margin: 3px 0 0 40px; background: #dbe8ee; border: 1px solid #8fb5cf; }
.ic-note { width: 23px; margin: 3px 0 0 45px; background: #d7d7d7; }
.ic-cloud { width: 28px; margin: 4px 0 0 32px; background: #8fd0ea; border-radius: 6px 6px 0 0; }
.ic-cloud + .tb-btn { margin-left: 19px; }
.ic-blue { width: 30px; margin-top: 1px; background: #6ea9d2; border-radius: 15px 15px 0 0; }
.ic-red { width: 30px; margin-top: 1px; background: #c9492b; border-radius: 15px 15px 0 0; }
.tb-btn + .tb-btn { margin-left: 4px; }
.ic-fox { width: 30px; margin: 1px 0 0 21px; background: #ef9b3f; border-radius: 12px 12px 0 0; }
.ic-fox + .tb-btn { margin-left: 15px; }
.ic-box { width: 32px; margin-top: 2px; background: #e8e8e8; border: 3px solid #555; border-bottom: 0; }
.tb-tray {
    display: flex;
    gap: 49px;
    margin-left: 682px;
    color: #fff;
    font-size: 12px;
    line-height: 12px;
    padding-top: 6px;
    white-space: nowrap;
}
```
